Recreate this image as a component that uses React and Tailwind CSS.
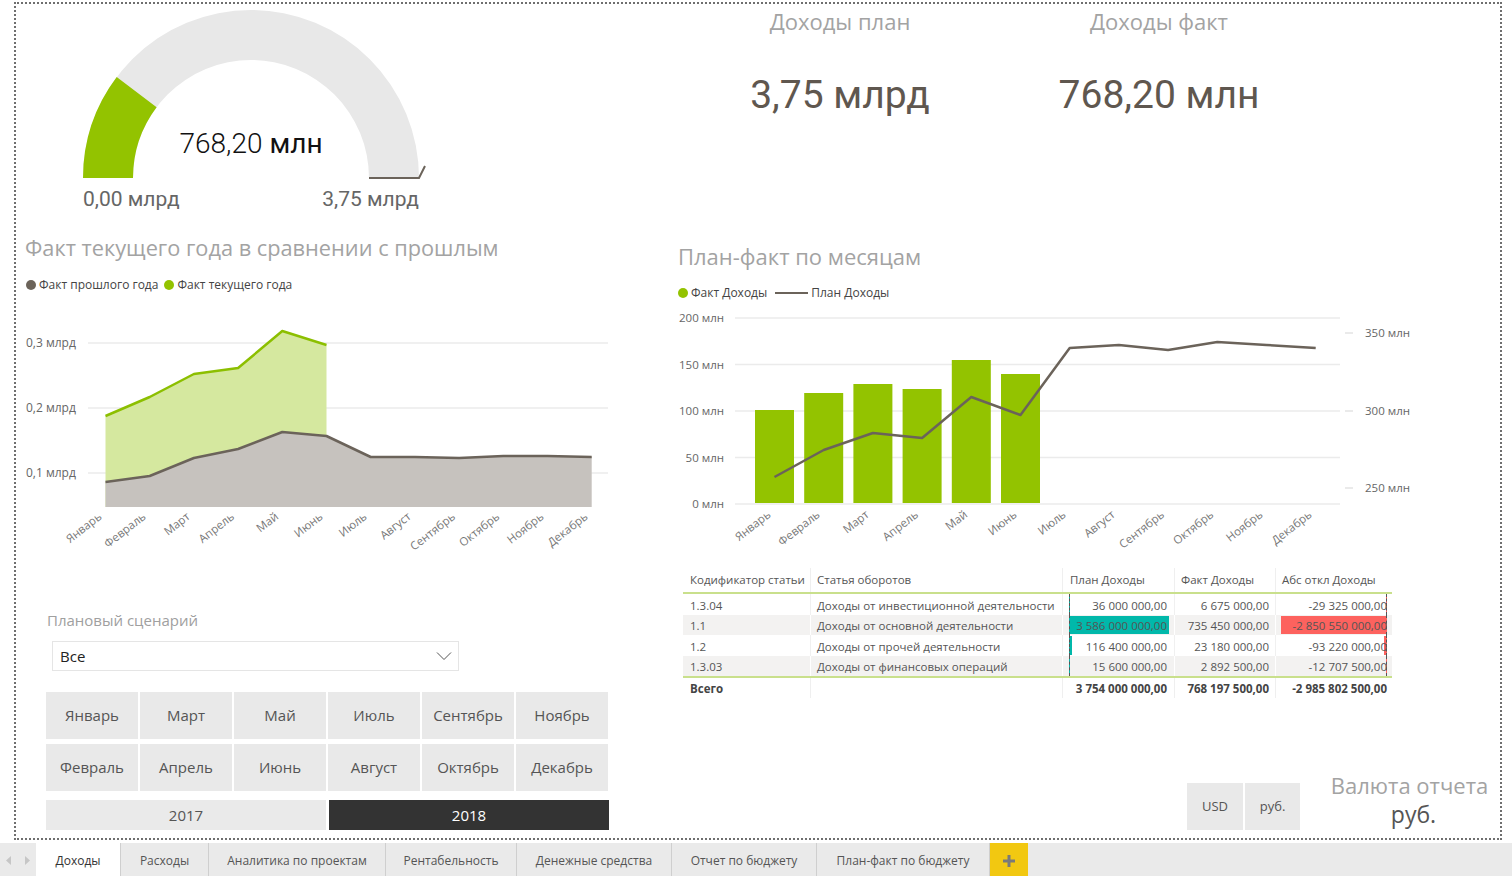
import React from "react";

const GREEN = "#93c300";
const DARK = "#6b635a";
const MONTHS = ["Январь","Февраль","Март","Апрель","Май","Июнь","Июль","Август","Сентябрь","Октябрь","Ноябрь","Декабрь"];
const SANS = "Open Sans, sans-serif";

function Gauge() {
  return (
    <svg width="600" height="218" viewBox="16 4 600 218" className="block shrink-0">
      <path d="M83 178 A168 168 0 0 1 419 178 L369 178 A118 118 0 0 0 133 178 Z" fill="#e8e8e8" />
      <path d="M83 178 A168 168 0 0 1 116.7 77.1 L156.6 107.2 A118 118 0 0 0 133 178 Z" fill={GREEN} />
      <polyline points="369,178 419,178 425,166" fill="none" stroke={DARK} strokeWidth="2" />
      <text x="251" y="153" textAnchor="middle" fontFamily="Roboto, sans-serif" fontSize="28" fill="#111">
        <tspan fontWeight="300">768,20</tspan>
        {" "}
        <tspan fontWeight="400">млн</tspan>
      </text>
      <text x="83" y="206" fontFamily="Roboto, sans-serif" fontSize="21" fill="#666">0,00 млрд</text>
      <text x="419" y="206" textAnchor="end" fontFamily="Roboto, sans-serif" fontSize="21" fill="#666">3,75 млрд</text>
    </svg>
  );
}

function AreaChart() {
  const xs = MONTHS.map((_, i) => 105.5 + i * 44.2);
  const gray = [482, 476, 458, 449, 432, 436, 457, 457, 458, 456, 456, 457];
  const green = [416, 397, 374, 368, 331, 345];
  const base = 507;
  const grayPts = xs.map((x, i) => `${x},${gray[i]}`).join(" ");
  const greenPts = green.map((y, i) => `${xs[i]},${y}`).join(" ");
  const yl = [["0,3 млрд", 343], ["0,2 млрд", 408], ["0,1 млрд", 473]];
  return (
    <svg width="600" height="268" viewBox="16 292 600 268" className="block shrink-0">
      {yl.map(([t, y]) => (
        <g key={t}>
          <line x1="88" x2="608" y1={y} y2={y} stroke="#ebebeb" strokeWidth="1.5" />
          <text x="26" y={y + 4} fontFamily={SANS} fontSize="12" fill="#666">{t}</text>
        </g>
      ))}
      <polygon points={`${xs[0]},${base} ${greenPts} ${xs[5]},${base}`} fill="#d5e89f" />
      <polygon points={`${xs[0]},${base} ${grayPts} ${xs[11]},${base}`} fill="#c6c2be" />
      <polyline points={greenPts} fill="none" stroke="#8cbf00" strokeWidth="2.5" strokeLinejoin="round" />
      <polyline points={grayPts} fill="none" stroke={DARK} strokeWidth="2.5" strokeLinejoin="round" />
      {MONTHS.map((m, i) => (
        <text key={m} x={xs[i] - 3} y={518} textAnchor="end" transform={`rotate(-38 ${xs[i] - 3} 518)`} fontFamily={SANS} fontSize="11.5" fill="#777">{m}</text>
      ))}
    </svg>
  );
}

function BarChart() {
  const xs = MONTHS.map((_, i) => 774.5 + i * 49.2);
  const tops = [410, 393, 384, 389, 360, 374];
  const plan = [477, 450, 433, 438, 397, 415, 348, 345, 350, 342, 345, 348];
  const left = [["200 млн", 318], ["150 млн", 364.5], ["100 млн", 411], ["50 млн", 457.5], ["0 млн", 504]];
  const right = [["350 млн", 333], ["300 млн", 411], ["250 млн", 488]];
  return (
    <svg width="884" height="260" viewBox="616 300 884 260" className="block shrink-0">
      {left.map(([t, y]) => (
        <g key={t}>
          <line x1="735" x2="1340" y1={y} y2={y} stroke="#ebebeb" strokeWidth="1.5" />
          <text x="724" y={y + 4} textAnchor="end" fontFamily={SANS} fontSize="11.5" fill="#666">{t}</text>
        </g>
      ))}
      {right.map(([t, y]) => (
        <g key={t}>
          <line x1="1345" x2="1353" y1={y} y2={y} stroke="#e3e3e3" strokeWidth="1.5" />
          <text x="1365" y={y + 4} fontFamily={SANS} fontSize="11.5" fill="#666">{t}</text>
        </g>
      ))}
      {tops.map((t, i) => (
        <rect key={i} x={xs[i] - 19.5} y={t} width="39" height={503 - t} fill={GREEN} />
      ))}
      <polyline points={plan.map((y, i) => `${xs[i]},${y}`).join(" ")} fill="none" stroke={DARK} strokeWidth="2.5" strokeLinejoin="round" />
      {MONTHS.map((m, i) => (
        <text key={m} x={xs[i] - 3} y={516} textAnchor="end" transform={`rotate(-38 ${xs[i] - 3} 516)`} fontFamily={SANS} fontSize="11.5" fill="#777">{m}</text>
      ))}
    </svg>
  );
}

const ROWS = [
  { code: "1.3.04", name: "Доходы от инвестиционной деятельности", plan: "36 000 000,00", fact: "6 675 000,00", abs: "-29 325 000,00", pv: 36000000, av: 29325000, bg: "bg-white", bd: "border-[#f0f0f0]" },
  { code: "1.1", name: "Доходы от основной деятельности", plan: "3 586 000 000,00", fact: "735 450 000,00", abs: "-2 850 550 000,00", pv: 3586000000, av: 2850550000, bg: "bg-[#f3f2f1]", bd: "border-white" },
  { code: "1.2", name: "Доходы от прочей деятельности", plan: "116 400 000,00", fact: "23 180 000,00", abs: "-93 220 000,00", pv: 116400000, av: 93220000, bg: "bg-white", bd: "border-[#f0f0f0]" },
  { code: "1.3.03", name: "Доходы от финансовых операций", plan: "15 600 000,00", fact: "2 892 500,00", abs: "-12 707 500,00", pv: 15600000, av: 12707500, bg: "bg-[#f3f2f1]", bd: "border-white" },
];

function Table() {
  const cols = "grid grid-cols-[128px_252px_112px_101px_116px]";
  return (
    <div className="ml-[67px] mt-[8px] w-[709px] text-[11.5px] text-[#555] whitespace-nowrap">
      <div className={`${cols} h-[26px] items-center border-b-2 border-[#c9e08c]`}>
        <div className="pl-[7px] h-full flex items-center border-r border-[#efefef]">Кодификатор статьи</div>
        <div className="pl-[6px] h-full flex items-center border-r border-[#efefef]">Статья оборотов</div>
        <div className="pl-[7px] h-full flex items-center border-r border-[#efefef]">План Доходы</div>
        <div className="pl-[6px] h-full flex items-center border-r border-[#efefef]">Факт Доходы</div>
        <div className="pl-[6px] h-full flex items-center">Абс откл Доходы</div>
      </div>
      {ROWS.map((r) => (
        <div key={r.code} className={`${cols} h-[20.5px] ${r.bg}`}>
          <div className={`pl-[7px] pt-[2px] flex items-center border-r ${r.bd}`}>{r.code}</div>
          <div className={`pl-[6px] pt-[2px] flex items-center border-r ${r.bd}`}>{r.name}</div>
          <div className={`relative flex items-center justify-end pr-[7px] border-r ${r.bd}`}>
            <div className="absolute left-[6px] top-[1px] bottom-[1px] bg-[#01b8aa]" style={{ width: `${Math.max(1, (r.pv / 3586000000) * 100)}px` }} />
            <div className="absolute left-[6px] top-0 bottom-0 border-l border-dashed border-[#555]" />
            <span className="relative pt-[2px]">{r.plan}</span>
          </div>
          <div className={`flex items-center justify-end pr-[6px] pt-[2px] border-r ${r.bd}`}>{r.fact}</div>
          <div className="relative flex items-center justify-end pr-[5px]">
            <div className="absolute right-[5px] top-[1px] bottom-[1px] bg-[#fd625e]" style={{ width: `${Math.max(1, (r.av / 2850550000) * 106)}px` }} />
            <div className="absolute right-[5px] top-0 bottom-0 border-r border-dashed border-[#555]" />
            <span className="relative pt-[2px]">{r.abs}</span>
          </div>
        </div>
      ))}
      <div className={`${cols} h-[22px] items-center border-t-2 border-[#c9e08c] font-bold text-[#444]`}>
        <div className="pl-[7px] pt-[2px] h-full flex items-center border-r border-[#efefef]">Всего</div>
        <div className="h-full border-r border-[#efefef]" />
        <div className="h-full pt-[2px] flex items-center justify-end pr-[7px] border-r border-[#efefef]">3 754 000 000,00</div>
        <div className="h-full pt-[2px] flex items-center justify-end pr-[6px] border-r border-[#efefef]">768 197 500,00</div>
        <div className="h-full pt-[2px] flex items-center justify-end pr-[5px]">-2 985 802 500,00</div>
      </div>
    </div>
  );
}

const TILE = "h-[47px] bg-[#e9e9e9] flex items-center justify-center text-[15px] text-[#555]";

function LeftColumn() {
  const order = ["Январь", "Март", "Май", "Июль", "Сентябрь", "Ноябрь", "Февраль", "Апрель", "Июнь", "Август", "Октябрь", "Декабрь"];
  return (
    <div className="w-[600px] shrink-0 flex flex-col">
      <Gauge />
      <div className="mt-[12px] h-[28px] pl-[9px] text-[21.75px] leading-[28px] text-[#a3a3a3] whitespace-nowrap">Факт текущего года в сравнении с прошлым</div>
      <div className="mt-[16px] h-[14px] pl-[10px] flex items-center text-[12px] text-[#444] whitespace-nowrap">
        <span className="w-[10px] h-[10px] rounded-full bg-[#6b635a]" />
        <span className="ml-[3px]">Факт прошлого года</span>
        <span className="ml-[6px] w-[10px] h-[10px] rounded-full bg-[#93c300]" />
        <span className="ml-[3px]">Факт текущего года</span>
      </div>
      <AreaChart />
      <div className="mt-[50px] h-[20px] pl-[31px] text-[15px] leading-[20px] text-[#a0a0a0]">Плановый сценарий</div>
      <div className="mt-[11px] ml-[36px] w-[407px] h-[30px] border border-[#e5e5e5] flex items-center justify-between pl-[7px] pr-[6px]">
        <span className="text-[15px] text-[#222]">Все</span>
        <svg width="16" height="10" viewBox="0 0 16 10"><polyline points="1,1.5 8,8.5 15,1.5" fill="none" stroke="#555" strokeWidth="1" /></svg>
      </div>
      <div className="mt-[21px] ml-[30px] w-[562px] grid grid-cols-6 gap-x-[2px] gap-y-[5px]">
        {order.map((m) => (
          <div key={m} className={TILE}>{m}</div>
        ))}
      </div>
      <div className="mt-[9px] ml-[30px] w-[563px] grid grid-cols-2 gap-x-[3px]">
        <div className="h-[30px] bg-[#eaeaea] flex items-center justify-center text-[15px] text-[#555]">2017</div>
        <div className="h-[30px] bg-[#333333] flex items-center justify-center text-[15px] text-white">2018</div>
      </div>
    </div>
  );
}

function RightColumn() {
  return (
    <div className="flex-1 flex flex-col">
      <div className="flex pl-[64px]">
        <div className="w-[320px] flex flex-col items-center">
          <div className="mt-[3px] h-[28px] text-[22px] leading-[28px] text-[#a3a3a3]">Доходы план</div>
          <div className="mt-[36px] h-[48px] text-[39px] leading-[48px] text-[#5f574f] font-['Roboto',sans-serif] whitespace-nowrap">3,75 млрд</div>
        </div>
        <div className="w-[318px] flex flex-col items-center">
          <div className="mt-[3px] h-[28px] text-[22px] leading-[28px] text-[#a3a3a3]">Доходы факт</div>
          <div className="mt-[36px] h-[48px] text-[39px] leading-[48px] text-[#5f574f] font-['Roboto',sans-serif] whitespace-nowrap">768,20 млн</div>
        </div>
      </div>
      <div className="mt-[123px] h-[28px] pl-[62px] text-[22px] leading-[28px] text-[#a3a3a3] whitespace-nowrap">План-факт по месяцам</div>
      <div className="mt-[16px] h-[14px] pl-[62px] flex items-center text-[12px] text-[#444] whitespace-nowrap">
        <span className="w-[10px] h-[10px] rounded-full bg-[#93c300]" />
        <span className="ml-[3px]">Факт Доходы</span>
        <span className="ml-[8px] w-[33px] h-[2.5px] bg-[#6b635a]" />
        <span className="ml-[3px]">План Доходы</span>
      </div>
      <BarChart />
      <Table />
      <div className="mt-[75px] h-[57px] flex pl-[571px]">
        <div className="mt-[10px] flex gap-[2px]">
          <div className="w-[56px] h-[47px] bg-[#e9e9e9] flex items-center justify-center text-[13px] text-[#555]">USD</div>
          <div className="w-[55px] h-[47px] bg-[#e9e9e9] flex items-center justify-center text-[13px] text-[#555]">руб.</div>
        </div>
        <div className="ml-[33px] w-[153px] flex flex-col items-center">
          <div className="h-[25px] text-[22px] leading-[25px] text-[#a3a3a3] whitespace-nowrap">Валюта отчета</div>
          <div className="h-[32px] pl-[8px] text-[23px] leading-[32px] text-[#555]">руб.</div>
        </div>
      </div>
    </div>
  );
}

const TABS = [
  { t: "Доходы", w: "w-[85px]", active: true },
  { t: "Расходы", w: "w-[88px]" },
  { t: "Аналитика по проектам", w: "w-[177px]" },
  { t: "Рентабельность", w: "w-[131px]" },
  { t: "Денежные средства", w: "w-[155px]" },
  { t: "Отчет по бюджету", w: "w-[145px]" },
  { t: "План-факт по бюджету", w: "w-[173px]" },
];

function TabBar() {
  return (
    <div className="mt-[3px] h-[33px] shrink-0 bg-[#eaeaea] flex text-[12px] whitespace-nowrap">
      <div className="w-[36px] flex items-center justify-center gap-[14px] pt-[2px]">
        <svg width="5" height="9" viewBox="0 0 5 9"><polygon points="5,0 0,4.5 5,9" fill="#c6c6c6" /></svg>
        <svg width="5" height="9" viewBox="0 0 5 9"><polygon points="0,0 5,4.5 0,9" fill="#c6c6c6" /></svg>
      </div>
      {TABS.map((tab) => (
        <div key={tab.t} className={`${tab.w} h-full pt-[3px] flex items-center justify-center border-r border-[#cfcfcf] ${tab.active ? "bg-white text-[#333]" : "text-[#555]"}`}>{tab.t}</div>
      ))}
      <div className="w-[38px] h-full bg-[#f2c811] flex items-center justify-center pt-[2px]">
        <svg width="12" height="12" viewBox="0 0 12 12"><rect x="4.5" y="0" width="3" height="12" fill="#7a7a7a" /><rect x="0" y="4.5" width="12" height="3" fill="#7a7a7a" /></svg>
      </div>
    </div>
  );
}

export default function App() {
  return (
    <div className="w-[1512px] h-[876px] bg-white overflow-hidden font-['Open_Sans',sans-serif] flex flex-col">
      <div className="ml-[14px] mt-[2px] w-[1488px] h-[838px] shrink-0 border-2 border-dotted border-[#6f6f6f] flex">
        <LeftColumn />
        <RightColumn />
      </div>
      <TabBar />
    </div>
  );
}
